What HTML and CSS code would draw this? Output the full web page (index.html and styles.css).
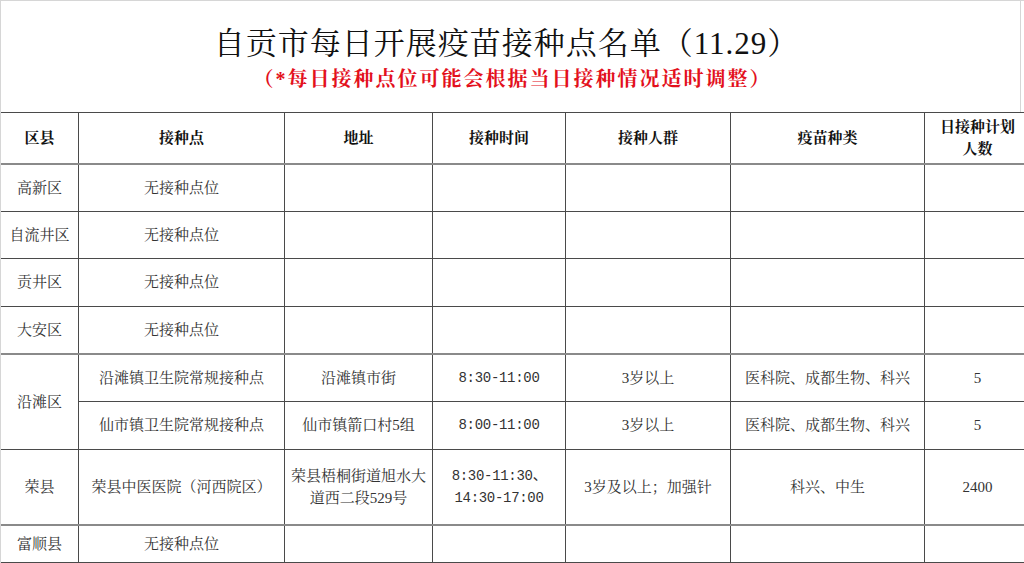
FILE: index.html
```html
<!DOCTYPE html>
<html lang="zh-CN">
<head>
<meta charset="utf-8">
<link rel="stylesheet" href="styles.css">
</head>
<body>
<div class="page">
  <header class="head">
    <h1 class="title">自贡市每日开展疫苗接种点名单（11.29）</h1>
    <p class="note">（*每日接种点位可能会根据当日接种情况适时调整）</p>
  </header>
  <table class="grid">
    <colgroup>
      <col class="c1"><col class="c2"><col class="c3"><col class="c4"><col class="c5"><col class="c6"><col class="c7">
    </colgroup>
    <thead>
      <tr class="hrow">
        <th>区县</th><th>接种点</th><th>地址</th><th>接种时间</th><th>接种人群</th><th>疫苗种类</th><th>日接种计划<br>人数</th>
      </tr>
    </thead>
    <tbody>
      <tr class="row sep"><td>高新区</td><td>无接种点位</td><td></td><td></td><td></td><td></td><td></td></tr>
      <tr class="row"><td>自流井区</td><td>无接种点位</td><td></td><td></td><td></td><td></td><td></td></tr>
      <tr class="row"><td>贡井区</td><td>无接种点位</td><td></td><td></td><td></td><td></td><td></td></tr>
      <tr class="row"><td>大安区</td><td>无接种点位</td><td></td><td></td><td></td><td></td><td></td></tr>
      <tr class="row sep"><td rowspan="2">沿滩区</td><td>沿滩镇卫生院常规接种点</td><td>沿滩镇市街</td><td class="num">8:30-11:00</td><td>3岁以上</td><td>医科院、成都生物、科兴</td><td>5</td></tr>
      <tr class="row"><td>仙市镇卫生院常规接种点</td><td>仙市镇箭口村5组</td><td class="num">8:00-11:00</td><td>3岁以上</td><td>医科院、成都生物、科兴</td><td>5</td></tr>
      <tr class="row tall"><td>荣县</td><td>荣县中医医院（河西院区）</td><td class="wrap">荣县梧桐街道旭水大<br>道西二段529号</td><td class="num wrap">8:30-11:30、<br>14:30-17:00</td><td>3岁及以上；加强针</td><td>科兴、中生</td><td>2400</td></tr>
      <tr class="row last sep"><td>富顺县</td><td>无接种点位</td><td></td><td></td><td></td><td></td><td></td></tr>
    </tbody>
  </table>
</div>
</body>
</html>
```
FILE: styles.css
```css
html, body {
  margin: 0;
  padding: 0;
  background: #fff;
}
body {
  width: 1024px;
  height: 563px;
  overflow: hidden;
  font-family: "Liberation Serif", "Noto Serif CJK SC", "Noto Sans CJK SC", serif;
}
.page {
  width: 1024px;
  height: 563px;
  box-sizing: border-box;
  border-top: 1px solid #d6d6d6;
  border-left: 1px solid #d6d6d6;
  overflow: hidden;
}
.head {
  height: 111px;
  box-sizing: border-box;
  padding-top: 24px;
  text-align: center;
  border-right: 1px solid #d6d6d6;
  margin-right: 3px;
}
.title {
  margin: 0;
  font-size: 31px;
  line-height: 38px;
  font-weight: normal;
  color: #111;
  letter-spacing: 1px;
  padding-right: 8px;
}
.note {
  margin: 3px 0 0;
  font-size: 20px;
  line-height: 26px;
  font-weight: bold;
  color: #e3101c;
  letter-spacing: 2px;
  padding-left: 4px;
}
.grid {
  width: 1030px;
  border-collapse: collapse;
  table-layout: fixed;
  margin-left: -1px;
}
.c1 { width: 78px; }
.c2 { width: 206px; }
.c3 { width: 148px; }
.c4 { width: 133px; }
.c5 { width: 165px; }
.c6 { width: 194px; }
.c7 { width: 106px; }
th, td {
  border: 1px solid #4a4a4a;
  padding: 0 2px;
  text-align: center;
  vertical-align: middle;
  font-size: 15px;
  line-height: 20px;
  color: #333;
  white-space: nowrap;
  overflow: hidden;
}
th {
  font-weight: bold;
  color: #111;
  height: 50px;
  border-top: 1px solid #4a4a4a;
}
.hrow th:last-child {
  line-height: 22px;
}
.row td {
  height: 46.6px;
}
.row.sep td {
  border-top: 2px solid #8a8a8a;
  height: 45.6px;
}
.row.tall td {
  height: 74px;
  border-bottom: 2px solid #8a8a8a;
}
.row.last td {
  height: 36px;
  border-top: none;
  border-bottom: 1px solid #4a4a4a;
}
td.num {
  font-family: "Liberation Mono", "Noto Sans CJK SC", monospace;
  font-size: 14px;
  letter-spacing: -0.3px;
}
td.wrap {
  line-height: 22px;
}
```
